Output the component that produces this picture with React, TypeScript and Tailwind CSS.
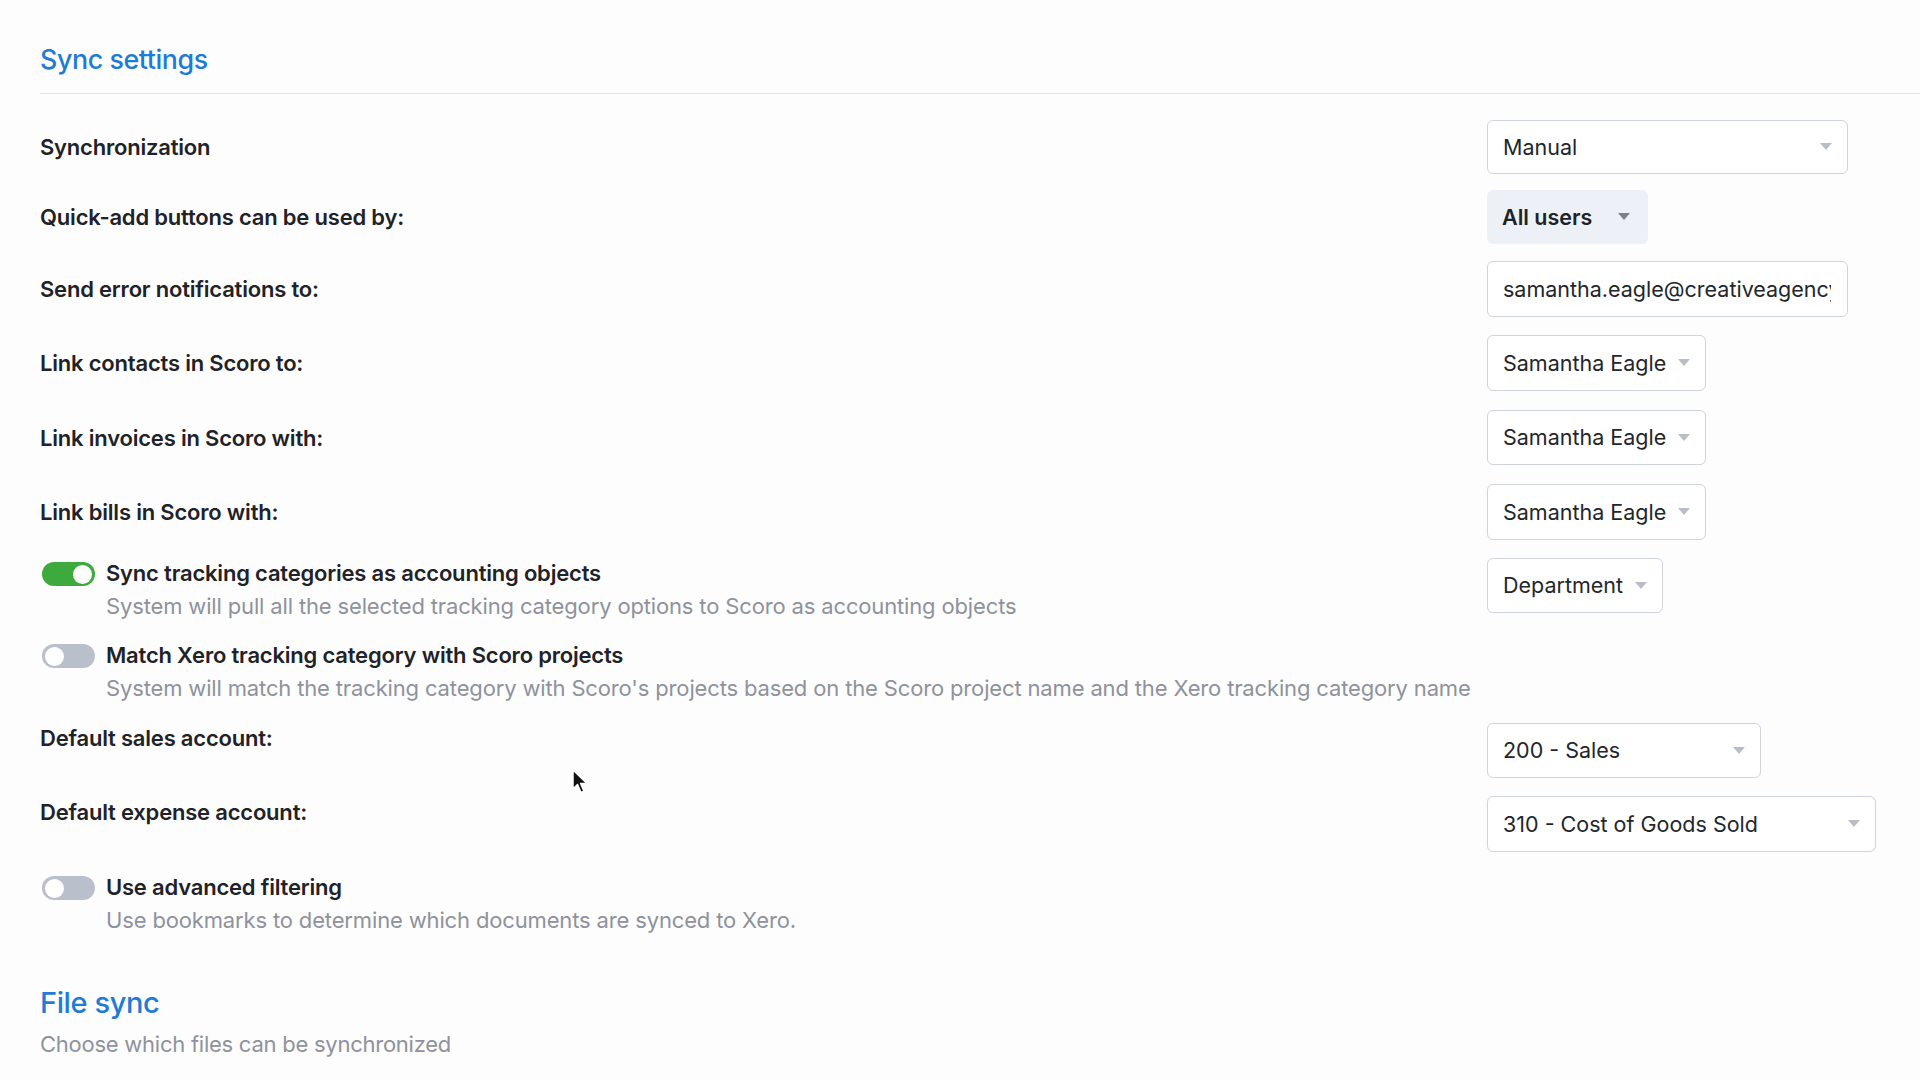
import React from "react";

const font = { fontFamily: "Inter, 'Noto Sans', sans-serif" };

function Arrow({ dark = false }: { dark?: boolean }) {
  return (
    <svg width="12" height="8" viewBox="0 0 12 8" className="shrink-0">
      <path d="M0 0 L12 0 L6 7 Z" fill={dark ? "#7b808b" : "#b8bdc8"} />
    </svg>
  );
}

function Select({ value, w, h = "h-[55px]" }: { value: string; w: string; h?: string }) {
  return (
    <div
      className={`${w} ${h} flex items-center justify-between rounded-[6px] border border-[#cfd3da] bg-white pl-[15px] pr-[15px]`}
    >
      <span className="text-[21.5px] text-[#23262b] whitespace-nowrap">{value}</span>
      <Arrow />
    </div>
  );
}

function Toggle({ on }: { on: boolean }) {
  return (
    <div
      className={`ml-[2px] mt-[3px] flex h-[24px] w-[53px] shrink-0 items-center rounded-full px-[3px] ${
        on ? "justify-end bg-[#3daa3d]" : "justify-start bg-[#b9c0cc]"
      }`}
    >
      <div className="h-[19px] w-[19px] rounded-full bg-white" />
    </div>
  );
}

function Label({ children }: { children: React.ReactNode }) {
  return (
    <div className="text-[22px] font-semibold leading-[28px] text-[#1f2328] tracking-[-0.2px] whitespace-nowrap">
      {children}
    </div>
  );
}

function Desc({ children }: { children: React.ReactNode }) {
  return (
    <div className="mt-[5px] text-[22px] leading-[28px] text-[#8e929b] tracking-[-0.15px] whitespace-nowrap">
      {children}
    </div>
  );
}

function Row({
  mt,
  label,
  control,
  h,
}: {
  mt: string;
  label: string;
  control: React.ReactNode;
  h: string;
}) {
  return (
    <div className={`${mt} grid grid-cols-[1447px_1fr] items-center ${h}`}>
      <Label>{label}</Label>
      <div>{control}</div>
    </div>
  );
}

export default function App() {
  return (
    <div className="relative min-h-[1080px] w-[1920px] overflow-hidden bg-[#fdfdfe]" style={font}>
      <div className="pl-[40px]">
        <div className="pt-[42px] pb-[17px] border-b border-[#e3e5e9]">
          <h2 className="text-[26.8px] leading-[34px] font-medium text-[#1f7bd4] tracking-[-0.4px]">
            Sync settings
          </h2>
        </div>

        <Row mt="mt-[26px]" h="h-[54px]" label="Synchronization" control={<Select value="Manual" w="w-[361px]" h="h-[54px]" />} />
        <Row
          mt="mt-[16px]"
          h="h-[54px]"
          label="Quick-add buttons can be used by:"
          control={
            <div className="flex h-[54px] w-[161px] items-center justify-between rounded-[6px] bg-[#edf1f7] pl-[15px] pr-[18px]">
              <span className="text-[21.5px] font-semibold text-[#1f2328]">All users</span>
              <Arrow dark />
            </div>
          }
        />
        <Row
          mt="mt-[17px]"
          h="h-[56px]"
          label="Send error notifications to:"
          control={
            <div className="flex h-[56px] w-[361px] items-center overflow-hidden rounded-[6px] border border-[#cfd3da] bg-white pl-[15px] pr-[16px]">
              <span className="block overflow-hidden whitespace-nowrap text-[21.5px] text-[#23262b]">
                samantha.eagle@creativeagency.com
              </span>
            </div>
          }
        />
        <Row mt="mt-[18px]" h="h-[56px]" label="Link contacts in Scoro to:" control={<Select value="Samantha Eagle" w="w-[219px]" h="h-[56px]" />} />
        <Row mt="mt-[19px]" h="h-[55px]" label="Link invoices in Scoro with:" control={<Select value="Samantha Eagle" w="w-[219px]" />} />
        <Row mt="mt-[19px]" h="h-[56px]" label="Link bills in Scoro with:" control={<Select value="Samantha Eagle" w="w-[219px]" h="h-[56px]" />} />

        <div className="mt-[18px] grid grid-cols-[1447px_1fr] items-start">
          <div className="flex items-start gap-[11px] pt-[1px]">
            <Toggle on />
            <div>
              <Label>Sync tracking categories as accounting objects</Label>
              <Desc>System will pull all the selected tracking category options to Scoro as accounting objects</Desc>
            </div>
          </div>
          <Select value="Department" w="w-[176px]" />
        </div>

        <div className="mt-[21px] flex items-start gap-[11px]">
          <Toggle on={false} />
          <div>
            <Label>Match Xero tracking category with Scoro projects</Label>
            <Desc>
              System will match the tracking category with Scoro's projects based on the Scoro project name and the Xero tracking category name
            </Desc>
          </div>
        </div>

        <div className="mt-[21px] grid grid-cols-[1447px_1fr] items-start">
          <div className="pt-[1px]">
            <Label>Default sales account:</Label>
          </div>
          <Select value="200 - Sales" w="w-[274px]" />
        </div>

        <div className="mt-[18px] grid grid-cols-[1447px_1fr] items-start">
          <div className="pt-[2px]">
            <Label>Default expense account:</Label>
          </div>
          <Select value="310 - Cost of Goods Sold" w="w-[389px]" h="h-[56px]" />
        </div>

        <div className="mt-[21px] flex items-start gap-[11px]">
          <Toggle on={false} />
          <div>
            <Label>Use advanced filtering</Label>
            <Desc>Use bookmarks to determine which documents are synced to Xero.</Desc>
          </div>
        </div>

        <h2 className="mt-[52px] text-[29px] leading-[34px] font-medium text-[#1f7bd4] tracking-[-0.4px]">File sync</h2>
        <div className="mt-[10px] text-[22px] leading-[28px] text-[#8e929b] tracking-[-0.25px]">
          Choose which files can be synchronized
        </div>
      </div>

      <svg
        className="absolute left-[572px] top-[769px]"
        width="18"
        height="26"
        viewBox="0 0 18 26"
      >
        <path
          d="M1 1 L1 20 L5.5 15.5 L9 23.5 L12 22.2 L8.6 14.5 L15 14.5 Z"
          fill="#111"
          stroke="#fff"
          strokeWidth="1.5"
          strokeLinejoin="round"
        />
      </svg>
    </div>
  );
}
